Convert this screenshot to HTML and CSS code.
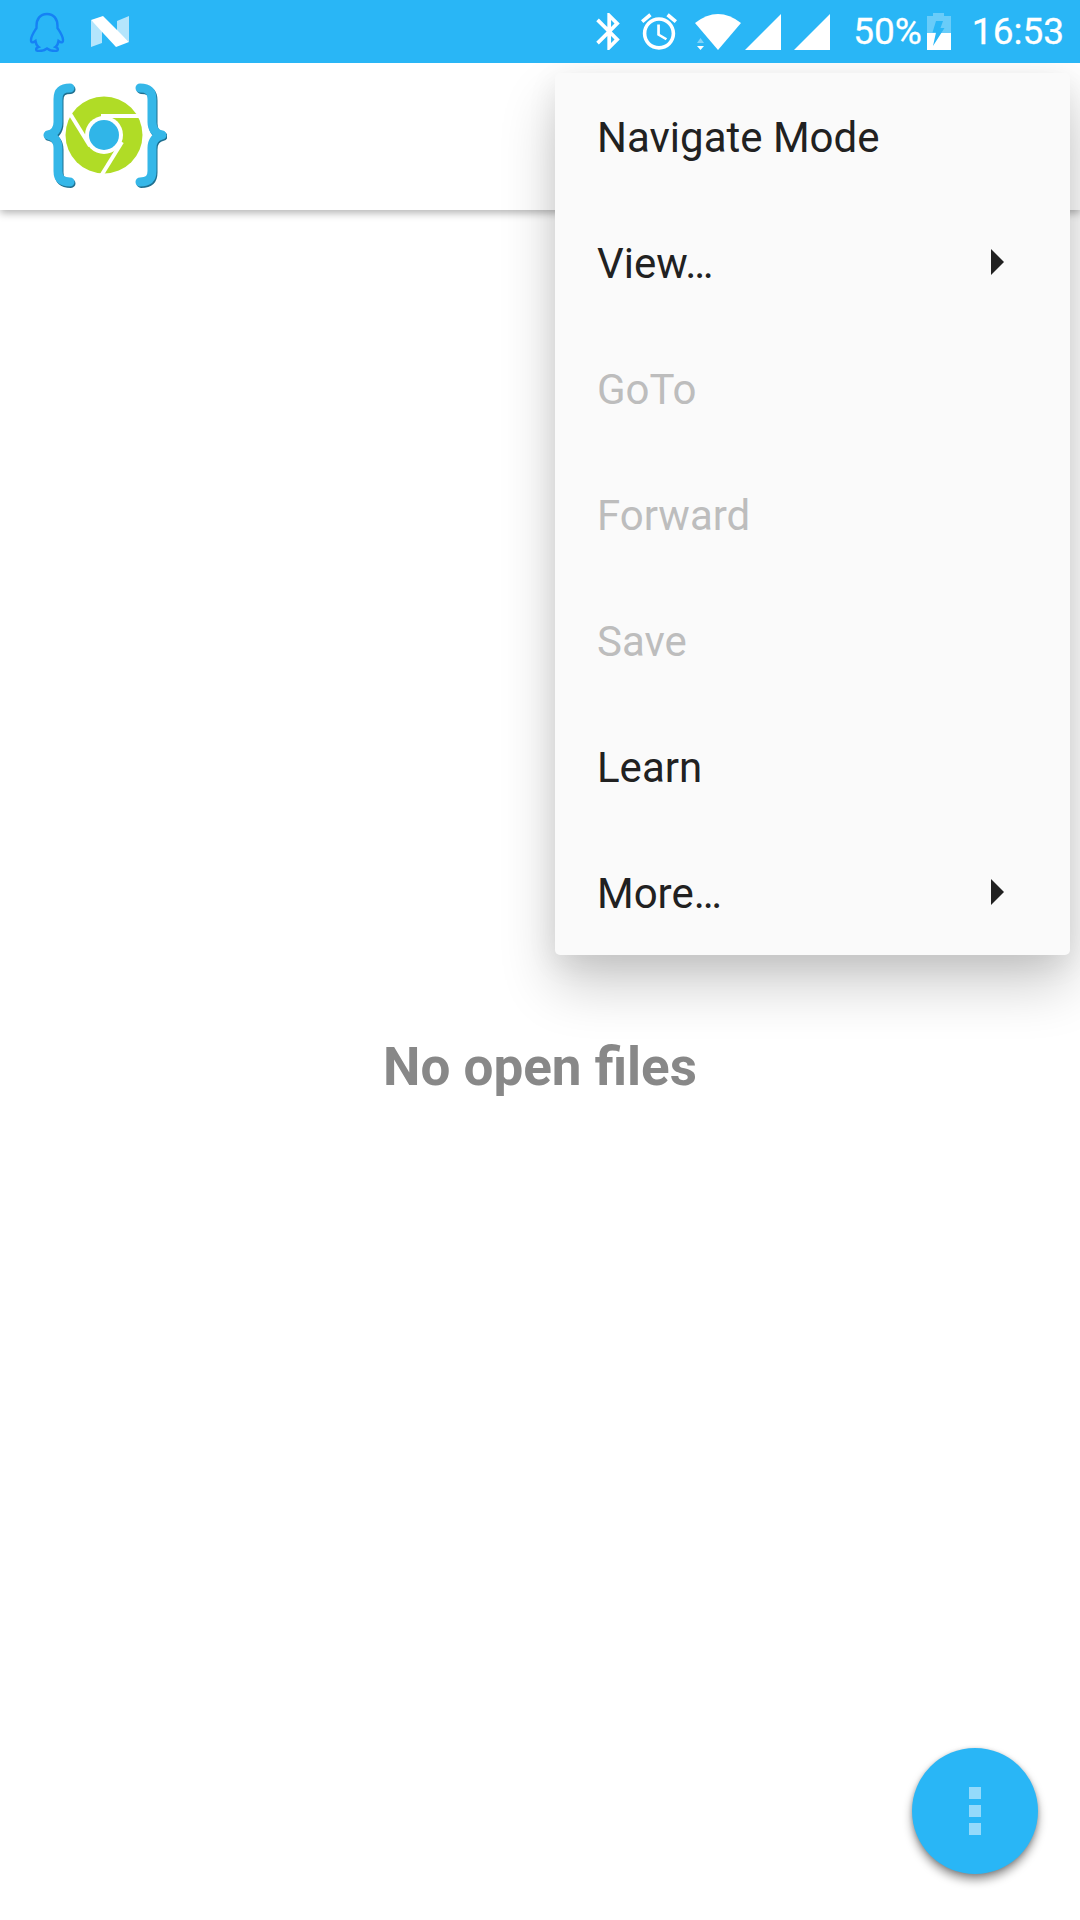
FILE: index.html
```html
<!DOCTYPE html>
<html lang="en">
<head>
  <meta charset="UTF-8">
  <meta name="viewport" content="width=device-width, initial-scale=1.0">
  <title>No open files</title>
  <link rel="stylesheet" href="styles.css">
</head>
<body>
  <div class="status-bar">
    <div class="status-left">
      <svg class="icon-qq" viewBox="0 0 36 40" width="36" height="40">
        <path d="M18 2C11 2 7.5 7 7.5 14V16C5 20 2 24 2 28C2 31 4 31 6.5 29C7 32 8 34 9.5 35C6.5 36 6 39 10 39C13 39 16 38 18 36.5C20 38 23 39 26 39C30 39 29.5 36 26.5 35C28 34 29 32 29.5 29C32 31 34 31 34 28C34 24 31 20 28.5 16V14C28.5 7 25 2 18 2Z" fill="none" stroke="#1581f5" stroke-width="2.4"/>
      </svg>
      <svg class="icon-n" viewBox="0 0 38 32" width="38" height="32">
        <polygon points="0,4 11,14 11,27 0,31" fill="#fff" opacity="0.65"/>
        <polygon points="26,5 38,0 38,26 26,15" fill="#fff" opacity="0.65"/>
        <polygon points="0,4 12,0 38,26 25,31" fill="#fff"/>
      </svg>
    </div>
    <div class="status-right">
      <svg viewBox="5 2 12.71 20" width="24" height="37">
        <path d="M17.71 7.71L12 2h-1v7.59L6.41 5 5 6.41 10.59 12 5 17.59 6.41 19 11 14.41V22h1l5.71-5.71-4.3-4.29 4.3-4.29zM13 5.83l1.88 1.88L13 9.59V5.83zm1.88 10.46L13 18.17v-3.76l1.88 1.88z" fill="#fff"/>
      </svg>
      <svg class="icon-alarm" viewBox="2 1.86 20 20.14" width="36" height="37">
        <path d="M22 5.72l-4.6-3.86-1.29 1.53 4.6 3.86L22 5.72zM7.88 3.39L6.6 1.86 2 5.71l1.29 1.53 4.59-3.85zM12.5 8H11v6l4.75 2.85.75-1.23-4-2.37V8zM12 4c-4.97 0-9 4.03-9 9s4.03 9 9 9 9-4.03 9-9-4.03-9-9-9zm0 16c-3.87 0-7-3.13-7-7s3.13-7 7-7 7 3.13 7 7-3.13 7-7 7z" fill="#fff"/>
      </svg>
      <svg class="icon-wifi" viewBox="0 0 46 36" width="46" height="36">
        <path d="M0 9Q23 -9 46 9L23 36Z" fill="#fff"/>
        <polygon points="2,29 9,29 5.5,24" fill="#fff" opacity="0.4"/>
        <polygon points="2,32 9,32 5.5,36" fill="#fff"/>
      </svg>
      <svg class="icon-signal" viewBox="0 0 36 36" width="36" height="36">
        <polygon points="0,36 36,0 36,36" fill="#fff"/>
      </svg>
      <svg class="icon-signal-2" viewBox="0 0 36 36" width="36" height="36">
        <polygon points="0,36 36,0 36,36" fill="#fff"/>
      </svg>
      <span class="status-text battery-text">50%</span>
      <svg class="icon-battery" viewBox="0 0 24 37" width="24" height="37">
        <path d="M6 0H17V3H24V20H0V3H6Z" fill="#fff" opacity="0.3"/>
        <rect x="0" y="20" width="24" height="17" fill="#fff"/>
        <path d="M9 8H16L13.5 15H17.5L6 33L9 19.5H5.5Z" fill="#29b6f6"/>
      </svg>
      <span class="status-text time-text">16:53</span>
    </div>
  </div>

  <div class="app-bar">
    <svg class="logo" viewBox="0 0 124 106" width="124" height="106">
      <!-- braces -->
      <g fill="none" stroke-width="9" stroke-linecap="round" stroke-linejoin="round">
        <path d="M27 6C19 6 15 9 15 17V40C15 47 11 52 5 53C11 54 15 59 15 66V89C15 97 19 100 27 100" stroke="#1f6f8f" transform="translate(1 1.4)"/>
        <path d="M97 6C105 6 109 9 109 17V40C109 47 113 52 119 53C113 54 109 59 109 66V89C109 97 105 100 97 100" stroke="#1f6f8f" transform="translate(1 1.4)"/>
        <path d="M27 6C19 6 15 9 15 17V40C15 47 11 52 5 53C11 54 15 59 15 66V89C15 97 19 100 27 100" stroke="#35b7e8"/>
        <path d="M97 6C105 6 109 9 109 17V40C109 47 113 52 119 53C113 54 109 59 109 66V89C109 97 105 100 97 100" stroke="#35b7e8"/>
      </g>
      <!-- wheel -->
      <circle cx="61" cy="53" r="38.5" fill="#b0dc26"/>
      <circle cx="61" cy="53" r="19" fill="#fff"/>
      <g stroke="#fff" stroke-width="4" fill="none">
        <path d="M102 34H58"/>
        <path d="M26 30L47 64"/>
        <path d="M58 94L79 60"/>
      </g>
      <circle cx="61" cy="53" r="15" fill="#30b5e8"/>
    </svg>
  </div>

  <div class="content">
    <div class="empty-text">No open files</div>
  </div>

  <div class="menu">
    <div class="menu-item">Navigate Mode</div>
    <div class="menu-item">View…<span class="arrow"></span></div>
    <div class="menu-item disabled">GoTo</div>
    <div class="menu-item disabled">Forward</div>
    <div class="menu-item disabled">Save</div>
    <div class="menu-item">Learn</div>
    <div class="menu-item">More…<span class="arrow"></span></div>
  </div>

  <button class="fab">
    <span class="dot"></span>
    <span class="dot"></span>
    <span class="dot"></span>
  </button>
</body>
</html>
```

FILE: styles.css
```css
body {
  margin: 0;
  width: 1080px;
  height: 1920px;
  overflow: hidden;
  position: relative;
  display: flex;
  flex-direction: column;
  background-color: white;
  font-family: Roboto, sans-serif;
}
.status-bar {
  height: 63px;
  flex-shrink: 0;
  display: flex;
  justify-content: space-between;
  align-items: center;
  padding: 0 16px 0 29px;
  background-color: #29b6f6;
  position: relative;
  z-index: 3;
}
.status-left,
.status-right {
  display: flex;
  align-items: center;
}
.icon-n {
  margin-left: 26px;
}
.icon-alarm {
  margin-left: 21px;
}
.icon-wifi {
  margin-left: 18px;
}
.icon-signal {
  margin-left: 4px;
}
.icon-signal-2 {
  margin-left: 13px;
}
.status-text {
  color: white;
  font-size: 37px;
  line-height: 63px;
  -webkit-text-stroke: 0.3px white;
}
.battery-text {
  margin-left: 23px;
}
.icon-battery {
  margin-left: 5px;
}
.time-text {
  margin-left: 21px;
}
.app-bar {
  height: 147px;
  flex-shrink: 0;
  display: flex;
  align-items: center;
  padding-left: 43px;
  background-color: white;
  box-shadow: 0 3px 8px rgba(0,0,0,0.3);
  position: relative;
  z-index: 1;
}
.logo {
  margin-bottom: 4px;
}
.content {
  flex: 1;
  display: flex;
  align-items: center;
  justify-content: center;
  padding-top: 4px;
}
.empty-text {
  font-size: 53px;
  font-weight: bold;
  color: #888888;
}
.menu {
  position: absolute;
  top: 73px;
  left: 555px;
  width: 515px;
  background-color: #fafafa;
  border-radius: 5px;
  box-shadow: 0 30px 56px rgba(0,0,0,0.2), 0 8px 30px rgba(0,0,0,0.08);
  z-index: 2;
}
.menu-item {
  height: 126px;
  box-sizing: border-box;
  padding: 2px 66px 0 42px;
  display: flex;
  align-items: center;
  justify-content: space-between;
  font-size: 42px;
  color: #212121;
}
.menu-item.disabled {
  color: #bdbdbd;
}
.arrow {
  width: 0;
  height: 0;
  border-left: 13px solid #212121;
  border-top: 13px solid transparent;
  border-bottom: 13px solid transparent;
  margin-bottom: 2px;
}
.fab {
  position: absolute;
  left: 912px;
  top: 1748px;
  width: 126px;
  height: 126px;
  padding: 0;
  border: none;
  border-radius: 50%;
  background-color: #29b6f6;
  box-shadow: 0 6px 10px rgba(0,0,0,0.4), 0 1px 4px rgba(0,0,0,0.2);
  display: flex;
  flex-direction: column;
  align-items: center;
  justify-content: center;
  gap: 6px;
}
.dot {
  width: 12px;
  height: 12px;
  background-color: #94dafb;
}
```
